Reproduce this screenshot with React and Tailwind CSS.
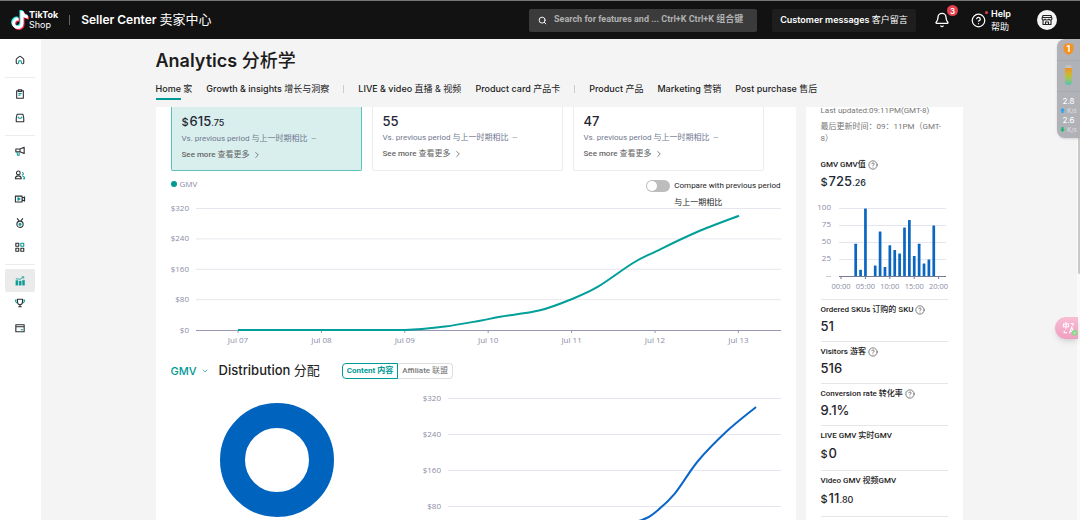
/**
 * Seller Center analytics page
 */

import { useState } from 'react';
import { Bell, ChevronDown, ChevronRight, CircleHelp, Search } from 'lucide-react';
import { FaTiktok } from 'react-icons/fa';

const navTabs = [
  { en: 'Home', zh: '家', active: true },
  { en: 'Growth & insights', zh: '增长与洞察', divider: true },
  { en: 'LIVE & video', zh: '直播 & 视频' },
  { en: 'Product card', zh: '产品卡', divider: true },
  { en: 'Product', zh: '产品' },
  { en: 'Marketing', zh: '营销' },
  { en: 'Post purchase', zh: '售后' },
];

const metricCards = [
  { symbol: '$', value: '615', cents: '.75', active: true },
  { value: '55' },
  { value: '47' },
];

const liveStats = [
  { label: 'Ordered SKUs 订购的 SKU', value: '51', help: true },
  { label: 'Visitors 游客', value: '516', help: true },
  { label: 'Conversion rate 转化率', value: '9.1%', help: true },
  { label: 'LIVE GMV 实时GMV', symbol: '$', value: '0' },
  { label: 'Video GMV 视频GMV', symbol: '$', value: '11', cents: '.80' },
];

// Hourly sales, indexed by hour of the day
const hourly = [0, 0, 0, 48, 10, 100, 0, 16, 66, 14, 46, 39, 34, 72, 83, 30, 48, 19, 25, 75];

const gmvPoints = [
  [67, 130], [150, 130], [234, 130], [274, 126.5], [309, 120.7], [329, 116.8], [369, 110.3],
  [401, 99], [427, 86.7], [462, 63], [485, 51.3], [526, 32], [568, 15.7],
];

const contentPoints = [
  [220, 144], [259, 135], [273, 126.7], [292, 108.3], [315, 76], [344, 46], [373, 22],
];

// Smooth line through a list of points
const linePath = (pts) => {
  let d = `M${pts[0][0]} ${pts[0][1]}`;
  for (let i = 0; i < pts.length - 1; i++) {
    const p0 = pts[i - 1] || pts[i];
    const p1 = pts[i];
    const p2 = pts[i + 1];
    const p3 = pts[i + 2] || p2;
    const flat = p1[1] === p2[1];
    const c1y = flat ? p1[1] : p1[1] + (p2[1] - p0[1]) / 6;
    const c2y = flat ? p2[1] : p2[1] - (p3[1] - p1[1]) / 6;
    d += ` C${p1[0] + (p2[0] - p0[0]) / 6} ${c1y} ${p2[0] - (p3[0] - p1[0]) / 6} ${c2y} ${p2[0]} ${p2[1]}`;
  }
  return d;
};

const DARK = '#2b2f33';
const TEAL = '#0f9b97';

const icons = {
  home: (
    <>
      <path d="M7 21H5.5A2.5 2.5 0 0 1 3 18.500V11c0-1 .4-1.800 1.200-2.400L10 3.800a3 3 0 0 1 4 0l5.800 4.800c.8.6 1.200 1.400 1.200 2.400v7.500a2.500 2.500 0 0 1-2.500 2.500H17" stroke={DARK} />
      <path d="M8.500 21v-4a3.500 3.500 0 0 1 7 0v4" stroke={TEAL} />
    </>
  ),
  orders: (
    <>
      <path d="M8 4H4v18h16V4h-4" stroke={DARK} />
      <path d="M8 2h8v4H8z" stroke={DARK} />
      <path d="M8 11h8M8 15h5" stroke={TEAL} />
    </>
  ),
  products: (
    <>
      <path d="M5 3h14l2 9v9H3v-9z" stroke={DARK} />
      <path d="M7 9c1 3 3 4 5 4s4-1 5-4" stroke={TEAL} />
    </>
  ),
  marketing: (
    <>
      <path d="M22 3v15l-10-4H2V7h10zM12 7v7" stroke={DARK} />
      <path d="M5 15l1 7h4v-6" stroke={TEAL} />
    </>
  ),
  people: (
    <>
      <circle cx="8" cy="7" r="4.500" stroke={DARK} />
      <path d="M1 21c0-5 3-7 7-7s7 2 7 7z" stroke={DARK} />
      <path d="M17 6a3 3 0 1 1 0 6M18 15c3 0 5 2 5 6h-4" stroke={TEAL} />
    </>
  ),
  video: (
    <>
      <path d="M1 5h16v14H1zM17 10l6-3v10l-6-3" stroke={DARK} />
      <path d="M7 9l5 3-5 3z" stroke={TEAL} fill={TEAL} />
    </>
  ),
  medal: (
    <>
      <circle cx="12" cy="15" r="7.500" stroke={DARK} />
      <path d="M5 1l5 6M19 1l-5 6" stroke={DARK} />
      <circle cx="12" cy="15" r="2.500" stroke={TEAL} fill={TEAL} />
    </>
  ),
  apps: (
    <>
      <path d="M2 3h7v7H2zM2 15h7v7H2zM14 15h7v7h-7z" stroke={DARK} />
      <path d="M14 3h7v7h-7z" stroke={TEAL} />
    </>
  ),
  analytics: (
    <>
      <path d="M2 11h5v11H2zM10 12h5v10h-5zM18 10h5v12h-5z" stroke={TEAL} fill={TEAL} strokeWidth="1" />
      <path d="M2 7h6l4 1 8-5M16 2h5v4" stroke={TEAL} strokeWidth="2" />
    </>
  ),
  trophy: (
    <>
      <path d="M6 3h12v6c0 4-2 7-6 7s-6-3-6-7zM12 16v5M8 21h8" stroke={DARK} />
      <path d="M4 5H1c0 4 1 6 4 7M20 5h3c0 4-1 6-4 7" stroke={TEAL} />
    </>
  ),
  wallet: (
    <>
      <path d="M2 4h20v17H2zM2 9h20" stroke={DARK} />
      <path d="M14 16h5" stroke={TEAL} />
    </>
  ),
};

const sidebarItems = [
  { key: 'home', label: 'Home', gap: 'mt-[11px]' },
  { divider: true, gap: 'mt-[7px]' },
  { key: 'orders', label: 'Orders', gap: 'mt-1.5' },
  { key: 'products', label: 'Products', gap: 'mt-1' },
  { divider: true, gap: 'mt-[7px]' },
  { key: 'marketing', label: 'Marketing', gap: 'mt-[5px]' },
  { key: 'people', label: 'Creators', gap: 'mt-1' },
  { key: 'video', label: 'Video', gap: 'mt-1' },
  { key: 'medal', label: 'Rewards', gap: 'mt-1' },
  { key: 'apps', label: 'Apps', gap: 'mt-1' },
  { divider: true, gap: 'mt-[7px]' },
  { key: 'analytics', label: 'Analytics', gap: 'mt-1', active: true },
  { key: 'trophy', label: 'Growth', gap: 'mt-px' },
  { key: 'wallet', label: 'Finance', gap: 'mt-[5px]' },
];

const Money = ({ symbol, value, cents }) => (
  <>
    {symbol && <span className="mr-px text-[11px]">{symbol}</span>}
    {value}
    {cents && <span className="text-[9px]">{cents}</span>}
  </>
);

const Header = () => (
  <header className="flex h-[39px] shrink-0 items-center border-t border-[#777] bg-[#121212] pr-[23px] pl-[10px] text-white">
    <div className="relative h-5 w-[18px]">
      <FaTiktok className="absolute top-0 left-0 size-[18px] text-[#25f4ee]" />
      <FaTiktok className="absolute top-0.5 left-0.5 size-[18px] text-[#fe2c55]" />
      <FaTiktok className="absolute top-px left-px size-[18px] text-white" />
    </div>
    <div className="ml-px text-[9px] leading-[10px]">
      <div className="font-bold">TikTok</div>
      <div>Shop</div>
    </div>
    <div className="mx-[11px] h-[10px] w-px bg-[#666]" />
    <div className="text-[12px] font-semibold whitespace-nowrap">
      Seller Center <span className="text-[13px] font-normal">卖家中心</span>
    </div>

    <label className="ml-auto flex h-[23px] w-[228px] items-center gap-[7px] rounded-xs bg-[#3b3b3b] pl-[9px] text-[#b0b0b0]">
      <Search className="size-[9px] shrink-0 text-white" strokeWidth={2.500} />
      <input
        type="text"
        aria-label="Search"
        placeholder="Search for features and ... Ctrl+K Ctrl+K 组合键"
        className="min-w-0 flex-1 bg-transparent font-['Roboto','Noto_Sans_CJK_SC',sans-serif] text-[9px] font-bold outline-none placeholder:text-[#b0b0b0]"
      />
    </label>
    <button className="ml-[15px] h-[23px] w-36 rounded-xs bg-[#1e1e1e] text-[9px] font-semibold whitespace-nowrap">
      Customer messages <span className="font-normal">客户留言</span>
    </button>
    <button aria-label="Notifications" className="relative ml-[18px]">
      <Bell className="size-4" strokeWidth={2} />
      <span className="absolute -top-[7px] -right-2 flex size-[11px] items-center justify-center rounded-full bg-[#e5404f] text-[8px] font-semibold">
        3
      </span>
    </button>
    <button className="relative ml-[21px] flex items-center gap-[5px] text-left text-[9px] leading-[13px] font-semibold">
      <CircleHelp className="size-[15px]" strokeWidth={2} />
      <span className="absolute top-1 left-[14px] size-[3px] rounded-full bg-[#e5404f]" />
      <span>
        Help
        <br />
        <span className="font-normal">帮助</span>
      </span>
    </button>
    <button aria-label="Shop" className="ml-[26px] flex size-5 items-center justify-center rounded-full bg-[#f4f4f4] text-[#222]">
      <svg viewBox="0 0 24 24" className="size-3" fill="none" stroke="currentColor" strokeWidth="2.2" strokeLinejoin="round">
        <path d="M4 3h16l2 6c0 2-1 3-3 3s-3-1-3-2c0 1-2 2-4 2s-4-1-4-2c0 1-1 2-3 2s-3-1-3-3zM4 12v9h16v-9M9 21v-5h6v5M3 7h18" />
      </svg>
    </button>
  </header>
);

const Sidebar = () => (
  <nav className="w-[41px] shrink-0 bg-white pr-1.5 pl-[5px]">
    {sidebarItems.map((item, index) =>
      item.divider ? (
        <div key={index} className={`${item.gap} h-px bg-[#ececec]`} />
      ) : (
        <a
          key={index}
          href="#"
          aria-label={item.label}
          className={`${item.gap} flex items-center justify-center rounded-xs ${
            item.active ? 'h-[23px] bg-[#ebebeb]' : 'h-5'
          }`}
        >
          <svg viewBox="0 0 24 24" className="size-[10px] overflow-visible" fill="none" strokeWidth="2.6" strokeLinejoin="round">
            {icons[item.key]}
          </svg>
        </a>
      )
    )}
  </nav>
);

const Tabs = () => (
  <nav className="mt-2 flex h-[26px] gap-[14px] text-[9px] leading-[15px] font-medium whitespace-nowrap text-[#222]">
    {navTabs.map((tab) => (
      <div key={tab.en} className="flex gap-[14px]">
        <a href="#" className="relative">
          {tab.en} <span className="font-normal">{tab.zh}</span>
          {tab.active && <span className="absolute top-[17px] left-0 h-0.5 w-[25px] bg-[#009995]" />}
        </a>
        {tab.divider && <span className="mt-1 h-2 w-px bg-[#ccc]" />}
      </div>
    ))}
  </nav>
);

const MetricCard = ({ card }) => (
  <div
    className={`flex-1 rounded-b-xs border border-t-0 px-[10px] pt-1.5 pb-[7px] ${
      card.active ? 'border-[#5fbfbb] bg-[#d9efed]' : 'border-[#ececec]'
    }`}
  >
    <div className="text-[13px] leading-[17px] font-medium text-[#1f2533]">
      <Money {...card} />
    </div>
    <div className="font-['Roboto','Noto_Sans_CJK_SC',sans-serif] text-[8px] leading-4 whitespace-nowrap text-[#6f7890]">
      Vs. previous period 与上一时期相比 &nbsp;--
    </div>
    <a href="#" className="flex h-4 items-center gap-[3px] font-['Roboto','Noto_Sans_CJK_SC',sans-serif] text-[8px] leading-4 text-[#666]">
      <span>
        <span className="font-medium">See more</span> 查看更多
      </span>
      <ChevronRight className="size-[10px]" />
    </a>
  </div>
);

const GmvChart = () => (
  <svg viewBox="0 0 610 152" className="block w-full font-['Open_Sans',sans-serif]" fontSize="8" fill="#8a8ca5">
    {['$320', '$240', '$160', '$80', '$0'].map((label, i) => (
      <g key={label}>
        <text x="18" y={11 + i * 30.400} textAnchor="end">{label}</text>
        {i < 4 && <line x1="25" x2="610" y1={8.500 + i * 30.400} y2={8.500 + i * 30.400} stroke="#e6e7ee" />}
      </g>
    ))}
    <line x1="25" x2="610" y1="130.500" y2="130.500" stroke="#9698b4" />
    {['07', '08', '09', '10', '11', '12', '13'].map((day, i) => (
      <g key={day}>
        <line x1={67 + i * 83.400} x2={67 + i * 83.400} y1="130" y2="133" stroke="#9698b4" />
        <text x={67 + i * 83.400} y="143" textAnchor="middle">{`Jul ${day}`}</text>
      </g>
    ))}
    <path d={linePath(gmvPoints)} fill="none" stroke="#009f99" strokeWidth="2" />
  </svg>
);

const ContentChart = () => (
  <svg viewBox="0 0 398 150" className="block min-w-0 flex-1 font-['Open_Sans',sans-serif]" fontSize="8" fill="#8a8ca5">
    {['$320', '$240', '$160', '$80'].map((label, i) => (
      <g key={label}>
        <text x="58" y={15.500 + i * 36} textAnchor="end">{label}</text>
        <line x1="65" x2="398" y1={13.500 + i * 36} y2={13.500 + i * 36} stroke="#e4e5ee" />
      </g>
    ))}
    <path d={linePath(contentPoints)} fill="none" stroke="#0a66c8" strokeWidth="2" />
  </svg>
);

const HourlyChart = () => (
  <svg viewBox="0 0 132 92" className="-ml-[5px] block w-[calc(100%+5px)] overflow-visible font-['Open_Sans',sans-serif]" fontSize="8" fill="#8a8ca5">
    {['100', '75', '50', '25', '--'].map((label, i) => (
      <g key={label}>
        <text x="15" y={8 + i * 17} textAnchor="end">{label}</text>
        {i < 4 && <line x1="23" x2="130" y1={6.500 + i * 17} y2={6.500 + i * 17} stroke="#e4e5ee" />}
      </g>
    ))}
    {hourly.map((value, hour) => (
      <rect key={hour} x={23.700 + hour * 4.880} y={74.500 - value * 0.68} width="2.700" height={value * 0.68} rx="0.5" fill="#0a66c0" />
    ))}
    <line x1="23" x2="130" y1="74.500" y2="74.500" stroke="#777a99" />
    {['00:00', '05:00', '10:00', '15:00', '20:00'].map((label, i) => (
      <g key={label}>
        <line x1={25 + i * 24.400} x2={25 + i * 24.400} y1="75" y2="77" stroke="#777a99" />
        <text x={25 + i * 24.400} y="87" textAnchor="middle" fontSize="7.5">{label}</text>
      </g>
    ))}
  </svg>
);

const LivePanel = () => (
  <aside className="w-[157px] shrink-0 bg-white px-[15px] font-['Roboto','Noto_Sans_CJK_SC',sans-serif] text-[8px]">
    <p className="-mt-0.5 leading-3 whitespace-nowrap text-[#777]">Last updated:09:11PM(GMT-8)</p>
    <p className="mt-1 leading-3 text-[#777]">最后更新时间：09：11PM（GMT-8）</p>
    <div className="mt-[13px] flex h-[14px] items-center gap-0.5 font-medium text-[#222]">
      GMV GMV值 <CircleHelp className="size-[10px] text-[#555]" strokeWidth={1.8} />
    </div>
    <div className="mb-[10px] font-['Inter',sans-serif] text-[13px] leading-[18px] font-medium text-[#222a38]">
      <Money symbol="$" value="725" cents=".26" />
    </div>
    <HourlyChart />
    <div className="mt-[5px]">
      {liveStats.map((stat) => (
        <div key={stat.label} className="border-t border-[#e6e6e6] pt-[3px] pb-1.5">
          <div className="flex h-[14px] items-center gap-0.5 font-medium text-[#222]">
            {stat.label}
            {stat.help && <CircleHelp className="size-[10px] text-[#555]" strokeWidth={1.8} />}
          </div>
          <div
            className={`font-['Inter',sans-serif] text-[13px] font-medium text-[#1f2329] ${
              stat.symbol ? 'leading-5' : 'leading-[18px]'
            }`}
          >
            <Money symbol={stat.symbol} value={stat.value} cents={stat.cents} />
          </div>
        </div>
      ))}
      <div className="h-4 border-t border-[#e6e6e6]" />
    </div>
  </aside>
);

const Speed = ({ value, up }) => (
  <div className="leading-[10px]">
    <div className="text-center">{value}</div>
    <div className="flex items-center gap-0.5 text-[6px] leading-[9px] text-[#e2e2e4]">
      <svg viewBox="0 0 10 10" className={`size-[5px] ${up ? 'text-[#1ea2f5]' : 'rotate-180 text-[#12b866]'}`}>
        <path d="M5 0l5 5H7v5H3V5H0z" fill="currentColor" />
      </svg>
      K/s
    </div>
  </div>
);

const NetworkWidget = () => (
  <div className="absolute top-[39px] right-0 flex h-[99px] w-[23px] flex-col items-center rounded-l-lg bg-[#b1b2b7] text-[8px] text-white shadow">
    <svg viewBox="0 0 20 22" className="mt-1 h-3 w-[11px]">
      <path d="M10 0l9 3v9c0 5-4 8-9 10-5-2-9-5-9-10V3z" fill="#f59120" />
      <text x="10" y="17" textAnchor="middle" fontSize="16" fontWeight="700" fill="#fff">1</text>
    </svg>
    <div className="mt-[5px] h-px w-full bg-[#a8a9ae]" />
    <div className="mt-1 h-5 w-[7px] shrink-0 overflow-hidden rounded-full bg-[#c2c2c5] pt-[3px]">
      <div className="h-full bg-linear-to-b from-[#ef9126] via-[#b9c13c] to-[#3fc4b0]" />
    </div>
    <div className="mt-1.5 h-px w-full bg-[#a8a9ae]" />
    <div className="mt-1 flex flex-col">
      <Speed value="2.8" up />
      <Speed value="2.6" />
    </div>
  </div>
);

const TranslateButton = () => (
  <button aria-label="Translate" className="absolute top-[317px] right-[2px] flex h-[22px] w-[23px] items-center rounded-l-full bg-linear-to-b from-[#f7bdd3] to-[#f09fc0] pl-2 shadow-md">
    <svg viewBox="0 0 30 30" className="size-3 overflow-visible" fill="none" stroke="#fff" strokeWidth="2.6">
      <path d="M1 5h13v7H1zM7.500 0v18M19 4h6v6M3 21v6h7M16 28l6-15 6 15M18 23h8" />
      <circle cx="29" cy="27" r="7" fill="#86d98b" stroke="none" />
      <path d="M26 27l2 2 4-4" strokeWidth="1.8" />
    </svg>
  </button>
);

export default function App() {
  const [compare, setCompare] = useState(false);

  return (
    <div className="relative flex h-screen flex-col overflow-hidden bg-[#f4f4f4] font-['Inter','Noto_Sans_CJK_SC',sans-serif]">
      <Header />

      <div className="flex min-h-0 flex-1">
        <Sidebar />

        <main className="flex min-w-0 flex-1 flex-col">
          <div className="mx-auto flex min-h-0 w-full max-w-[807px] flex-1 flex-col">
            <h1 className="mt-[10px] text-[18px] leading-6 font-semibold text-[#1c1c1c]">
              Analytics <span className="font-medium">分析学</span>
            </h1>
            <Tabs />

            {/* Scrolled report */}
            <div className="flex min-h-0 flex-1 gap-[10px] overflow-hidden">
              <section className="min-w-0 flex-1 bg-white px-[15px]">
                <div className="flex gap-[10px] pr-[17px]">
                  {metricCards.map((card) => (
                    <MetricCard key={card.value} card={card} />
                  ))}
                </div>

                <div className="mt-1.5 flex h-[23px] items-start justify-between">
                  <div className="flex items-center gap-[3px] font-['Open_Sans',sans-serif] text-[8px] leading-[14px] text-[#8a8ca5]">
                    <span className="size-1.5 rounded-full bg-[#009995]" />
                    GMV
                  </div>
                  <div className="flex items-start gap-1">
                    <input
                      id="compare"
                      type="checkbox"
                      role="switch"
                      checked={compare}
                      onChange={(e) => setCompare(e.target.checked)}
                      className="mt-[3px] flex h-3 w-6 appearance-none items-center rounded-full bg-[#bdbdbd] px-px before:size-[10px] before:rounded-full before:bg-white checked:justify-end checked:bg-[#009995]"
                    />
                    <label htmlFor="compare" className="font-['Roboto','Noto_Sans_CJK_SC',sans-serif] text-[8px] leading-[17px] text-[#222]">
                      Compare with previous period
                      <br />
                      与上一期相比
                    </label>
                  </div>
                </div>
                <GmvChart />

                <div className="mt-[11px] flex h-4 items-center whitespace-nowrap">
                  <button className="flex items-center gap-1 text-[11px] font-medium text-[#009995]">
                    GMV <ChevronDown className="size-2" />
                  </button>
                  <h2 className="ml-[10px] text-[13px] font-medium text-[#222]">
                    Distribution <span className="font-normal">分配</span>
                  </h2>
                  <div className="ml-[22px] flex font-['Roboto','Noto_Sans_CJK_SC',sans-serif] text-[8px] leading-[14px]">
                    <button className="rounded-l-sm border border-[#009995] px-1 font-bold text-[#009995]">
                      Content 内容
                    </button>
                    <button className="rounded-r-sm border border-l-0 border-[#ddd] px-1 text-[#777]">
                      <span className="font-medium">Affiliate</span> 联盟
                    </button>
                  </div>
                </div>

                <div className="mt-1.5 flex items-start">
                  <div className="flex w-[212px] justify-center pt-[18px]">
                    <svg viewBox="0 0 114 114" className="size-[114px]">
                      <circle cx="57" cy="57" r="44.500" fill="none" stroke="#0064bf" strokeWidth="25" />
                    </svg>
                  </div>
                  <ContentChart />
                </div>
              </section>

              <LivePanel />
            </div>
          </div>
        </main>

        {/* Page scrollbar */}
        <div className="w-[3px] shrink-0 bg-[#fafafa]">
          <div className="ml-px h-[235px] rounded-full bg-[#c9c9c9]" />
        </div>
      </div>

      <NetworkWidget />
      <TranslateButton />
    </div>
  );
}
